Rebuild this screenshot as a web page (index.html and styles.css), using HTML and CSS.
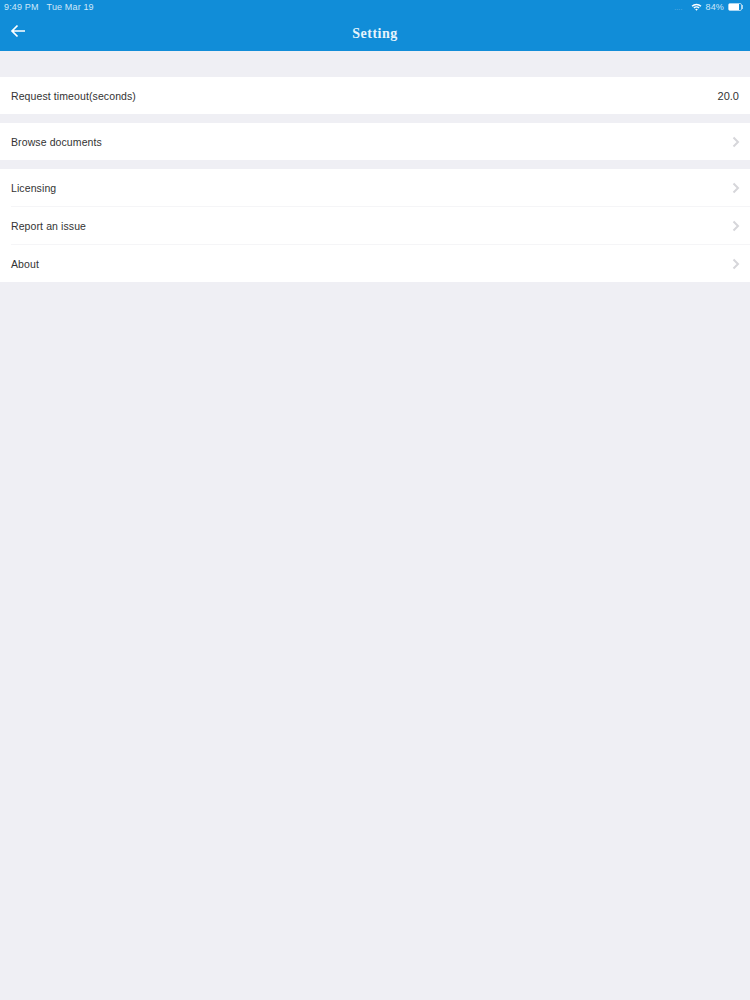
FILE: index.html
```html
<!DOCTYPE html>
<html lang="en">
<head>
  <meta charset="UTF-8" />
  <title>Setting</title>
  <link rel="stylesheet" href="styles.css">
</head>
<body>

  <!-- Blue header with status bar -->
  <div class="header">
    <div class="status-bar">
      <div class="status-left">
        <span>9:49 PM</span>
        <span>Tue Mar 19</span>
      </div>
      <div class="status-right">
        <span class="signal-dots">....</span>
        <svg class="wifi" width="11" height="8" viewBox="0 0 12 9">
          <path d="M0.4 3 A8 8 0 0 1 11.6 3 L10.4 4.3 A6.2 6.2 0 0 0 1.6 4.3 Z" fill="#fff"/>
          <path d="M2.5 5.1 A5 5 0 0 1 9.5 5.1 L8.3 6.3 A3.3 3.3 0 0 0 3.7 6.3 Z" fill="#fff"/>
          <path d="M4.5 7.1 A2.2 2.2 0 0 1 7.5 7.1 L6 8.8 Z" fill="#fff"/>
        </svg>
        <span>84%</span>
        <span class="battery"><span class="battery-level"></span></span>
      </div>
    </div>
    <div class="nav-bar">
      <svg class="back" width="16" height="14" viewBox="0 0 16 14">
        <path d="M15 7 H2 M7.5 1.5 L2 7 L7.5 12.5" fill="none" stroke="#fff" stroke-width="1.7"/>
      </svg>
      <div class="title">Setting</div>
    </div>
  </div>

  <div class="group first">
    <div class="row">
      <span>Request timeout(seconds)</span>
      <span class="value">20.0</span>
    </div>
  </div>

  <div class="group">
    <div class="row">
      <span>Browse documents</span>
      <svg class="chevron" width="8" height="12" viewBox="0 0 8 12"><path d="M1.5 1.5 L6 6 L1.5 10.5" fill="none" stroke="#d6d6da" stroke-width="2"/></svg>
    </div>
  </div>

  <div class="group">
    <div class="row">
      <span>Licensing</span>
      <svg class="chevron" width="8" height="12" viewBox="0 0 8 12"><path d="M1.5 1.5 L6 6 L1.5 10.5" fill="none" stroke="#d6d6da" stroke-width="2"/></svg>
    </div>
    <div class="row">
      <span>Report an issue</span>
      <svg class="chevron" width="8" height="12" viewBox="0 0 8 12"><path d="M1.5 1.5 L6 6 L1.5 10.5" fill="none" stroke="#d6d6da" stroke-width="2"/></svg>
    </div>
    <div class="row">
      <span>About</span>
      <svg class="chevron" width="8" height="12" viewBox="0 0 8 12"><path d="M1.5 1.5 L6 6 L1.5 10.5" fill="none" stroke="#d6d6da" stroke-width="2"/></svg>
    </div>
  </div>

</body>
</html>
```

FILE: styles.css
```css
body {
  margin: 0;
  background-color: #efeff4;
  font-family: "Liberation Sans", Arial, sans-serif;
  color: #333;
  height: 1000px;
  overflow: hidden;
}
/* Header */
.header {
  height: 51px;
  background-color: #118dd8;
  color: #fff;
}
.status-bar {
  display: flex;
  justify-content: space-between;
  align-items: center;
  height: 14px;
  padding: 0 8px 0 4px;
  font-size: 9px;
  letter-spacing: 0.15px;
  color: #cfe8f8;
}
.status-left {
  display: flex;
  gap: 8px;
}
.status-right {
  display: flex;
  align-items: center;
  gap: 4px;
}
.signal-dots {
  color: #6db6e6;
  font-size: 7px;
  margin-right: 4px;
}
.battery {
  display: block;
  width: 12px;
  height: 6px;
  border: 1px solid #a9d6f2;
  border-radius: 2px;
  box-shadow: 3px 0 0 -2px #a9d6f2;
}
.battery-level {
  display: block;
  width: 84%;
  height: 100%;
  background-color: #fff;
}
.nav-bar {
  position: relative;
  height: 37px;
}
.back {
  position: absolute;
  left: 10px;
  top: 10px;
}
.title {
  padding-top: 12px;
  text-align: center;
  font-family: "Liberation Serif", serif;
  font-size: 14px;
  font-weight: bold;
  letter-spacing: 0.5px;
  color: #e6f4fc;
}
/* Groups */
.group {
  margin-top: 9px;
  background-color: #fff;
}
.group.first {
  margin-top: 26px;
}
.row {
  display: flex;
  justify-content: space-between;
  align-items: center;
  height: 37px;
  margin-left: 11px;
  padding-right: 10px;
  font-size: 10.5px;
  letter-spacing: 0.1px;
  border-top: 1px solid #f5f5f7;
}
.group .row:first-child {
  border-top: none;
}
.value {
  font-size: 11px;
  letter-spacing: 0;
  margin-right: 1px;
}
```
